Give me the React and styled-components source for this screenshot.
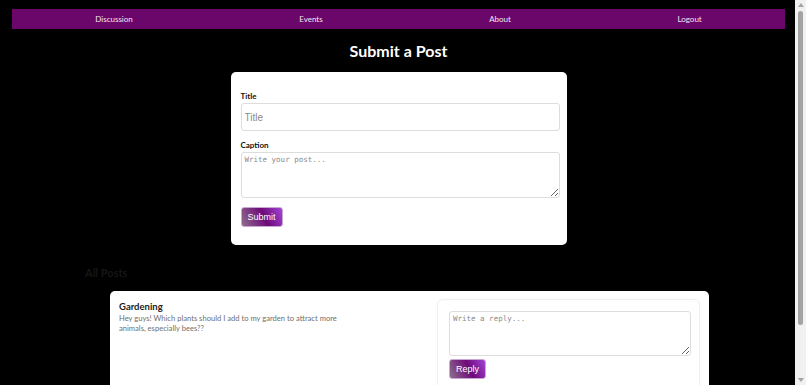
import styled, { createGlobalStyle } from "styled-components"

const GlobalStyle = createGlobalStyle`
    html {
        background: #000;
    }
    body {
        margin: 0;
        padding: 9px 21px 0 12px;
        background: #000;
        font-family: Lato, "Open Sans", sans-serif;
    }
`

// the browser scrollbar seen on the right edge of the page
const Scrollbar = styled.div`
    position: fixed;
    top: 0;
    right: 0;
    width: 11px;
    height: 100vh;
    background: #f1f1f1;
    display: flex;
    flex-direction: column;
    align-items: center;
    justify-content: space-between;
    padding: 3px 0;
    box-sizing: border-box;
`
const Arrow = styled.div`
    width: 0;
    height: 0;
    border-left: 3px solid transparent;
    border-right: 3px solid transparent;
    ${(p) => (p.$down ? "border-top: 4px solid #a3a3a3;" : "border-bottom: 4px solid #a3a3a3;")}
`
const Thumb = styled.div`
    width: 5px;
    height: 314px;
    margin-bottom: auto;
    margin-top: 4px;
    background: #a3a3a3;
    border-radius: 3px;
`

const Nav = styled.nav`
    height: 20px;
    background: #6b066b;
    display: flex;
    align-items: center;
    justify-content: space-around;
`
const NavLink = styled.a`
    color: #f3e6f3;
    font-size: 8px;
    text-decoration: none;
    cursor: pointer;
`
const Heading = styled.h1`
    margin: 12px 0 11px;
    text-align: center;
    color: #fff;
    font-size: 16px;
    font-weight: 700;
    line-height: 20px;
`
const Card = styled.div`
    width: 336px;
    margin: 0 auto;
    box-sizing: border-box;
    background: #fff;
    border-radius: 5px;
    padding: 19px 7px 18px 10px;
`
const Form = styled.form`
    display: flex;
    flex-direction: column;
    align-items: flex-start;
`
const Label = styled.label`
    font-size: 8px;
    font-weight: 700;
    color: #111;
    line-height: 10px;
    margin: ${(p) => (p.$first ? "0" : "9px")} 0 2px;
`
const Input = styled.input`
    width: 100%;
    height: 28px;
    box-sizing: border-box;
    border: 1px solid #ddd;
    border-radius: 3px;
    padding: 0 3px;
    font-family: "Liberation Sans", Arial, sans-serif;
    font-size: 10px;
    &::placeholder {
        color: #8a8a8a;
    }
`
const TextArea = styled.textarea`
    width: 100%;
    height: ${(p) => p.$height || "46px"};
    box-sizing: border-box;
    border: 1px solid #ddd;
    border-radius: 3px;
    padding: 2px 3px;
    resize: vertical;
    font-family: "DejaVu Sans Mono", "Liberation Mono", monospace;
    font-size: 7.5px;
    &::placeholder {
        color: #8a8a8a;
    }
`
const Button = styled.button`
    margin-top: ${(p) => p.$top || "9px"};
    height: 20px;
    padding: 0 6px;
    border: 1px solid #caa6d6;
    border-radius: 3px;
    background: linear-gradient(65deg, #8d6e8d 0%, #6e0a78 55%, #a344d8 100%);
    color: #fff;
    font-family: "Liberation Sans", Arial, sans-serif;
    font-size: 9px;
    cursor: pointer;
`
const Posts = styled.section`
    padding: 20px 0 30px 73px;
`
const PostsTitle = styled.h2`
    margin: 0 0 10px;
    color: #161616;
    font-size: 11px;
    font-weight: 700;
    line-height: 16px;
`
const Post = styled.div`
    margin-left: 25px;
    width: 599px;
    box-sizing: border-box;
    background: #fff;
    border-radius: 5px;
    padding: 8px 9px 40px;
    display: flex;
    justify-content: space-between;
`
const PostBody = styled.div`
    width: 240px;
    padding-top: 2px;
`
const PostTitle = styled.h3`
    margin: 0;
    font-size: 9.5px;
    font-weight: 700;
    color: #222;
    line-height: 12px;
`
const PostText = styled.p`
    margin: 0;
    font-size: 7.6px;
    color: #707070;
    line-height: 10px;
`
const ReplyBox = styled.div`
    width: 263px;
    box-sizing: border-box;
    padding: 11px 8px 11px 11px;
    border: 1px solid #f0f0f0;
    border-radius: 6px;
    box-shadow: 0 0 3px rgba(0, 0, 0, 0.04);
    display: flex;
    flex-direction: column;
    align-items: flex-start;
`

const App = () => {
    return (
        <>
            <GlobalStyle />
            <Nav>
                <NavLink>Discussion</NavLink>
                <NavLink>Events</NavLink>
                <NavLink>About</NavLink>
                <NavLink>Logout</NavLink>
            </Nav>
            <Heading>Submit a Post</Heading>
            <Card>
                <Form onSubmit={(e) => e.preventDefault()}>
                    <Label $first>Title</Label>
                    <Input placeholder="Title" />
                    <Label>Caption</Label>
                    <TextArea placeholder="Write your post..." />
                    <Button>Submit</Button>
                </Form>
            </Card>
            <Posts>
                <PostsTitle>All Posts</PostsTitle>
                <Post>
                    <PostBody>
                        <PostTitle>Gardening</PostTitle>
                        <PostText>Hey guys! Which plants should I add to my garden to attract more animals, especially bees??</PostText>
                    </PostBody>
                    <ReplyBox>
                        <TextArea placeholder="Write a reply..." $height="45px" />
                        <Button $top="3px">Reply</Button>
                    </ReplyBox>
                </Post>
            </Posts>
            <Scrollbar>
                <Arrow />
                <Thumb />
                <Arrow $down />
            </Scrollbar>
        </>
    )
}

export default App
